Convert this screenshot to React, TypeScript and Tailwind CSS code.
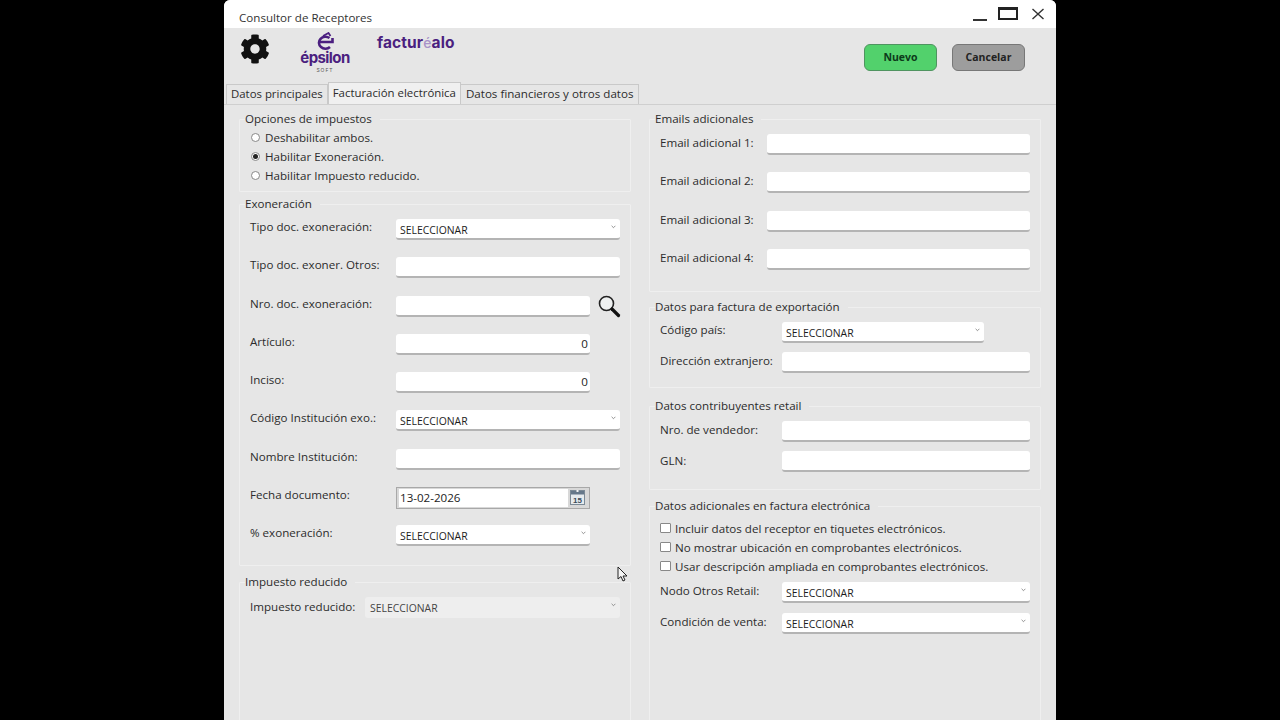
import React from "react";
import { FaCog } from "react-icons/fa";

const FONT = "font-['Open_Sans','Noto_Sans',sans-serif]";
const TEXT = "text-[11.6px] text-[#2c2c2c]";

function Group(props: { title: string; className?: string; body?: string; children: React.ReactNode }) {
  return (
    <fieldset className={`border border-[#efefef] rounded-[1px] ${props.className ?? ""}`}>
      <legend className={`ml-[5px] pr-[8px] leading-[14px] ${TEXT}`}>{props.title}</legend>
      <div className={props.body}>{props.children}</div>
    </fieldset>
  );
}

function Chevron() {
  return (
    <svg width="5" height="4" viewBox="0 0 5 4" className="absolute right-[4px] top-[6px]">
      <path d="M0.6 0.8 L2.5 2.7 L4.4 0.8" fill="none" stroke="#777" strokeWidth="0.8" />
    </svg>
  );
}

function Select(props: { className: string; disabled?: boolean }) {
  return props.disabled ? (
    <div className={`relative h-[21px] rounded-[3px] bg-[#eeeeee] pl-[5px] text-[10.4px] leading-[22px] text-[#444] ${props.className}`}>
      SELECCIONAR
      <Chevron />
    </div>
  ) : (
    <div className={`relative h-[21px] rounded-[3px] bg-white border-b-2 border-[#b4b4b4] pl-[4px] text-[10.4px] leading-[22px] text-[#1c1c1c] ${props.className}`}>
      SELECCIONAR
      <Chevron />
    </div>
  );
}

function Input(props: { className: string; value?: string }) {
  return (
    <div className={`h-[21px] rounded-[3px] bg-white border-b-2 border-[#b4b4b4] pr-[2px] text-right text-[11.6px] leading-[20px] text-[#222] ${props.className}`}>
      {props.value}
    </div>
  );
}

function Radio(props: { label: string; checked?: boolean }) {
  return (
    <div className="flex items-center h-[19px] pl-[11px]">
      <span className="w-[9px] h-[9px] rounded-full border border-[#888] bg-white flex items-center justify-center">
        {props.checked && <span className="w-[5px] h-[5px] rounded-full bg-[#222]" />}
      </span>
      <span className={`ml-[5px] ${TEXT}`}>{props.label}</span>
    </div>
  );
}

function Check(props: { label: string }) {
  return (
    <div className="flex items-center h-[19px] pl-[10px]">
      <span className="w-[11px] h-[10px] border border-[#888] rounded-[1px] bg-white -mt-[1px]" />
      <span className={`ml-[4px] ${TEXT}`}>{props.label}</span>
    </div>
  );
}

function Row(props: { label: string; labelWidth: string; height: string; labelClass?: string; children: React.ReactNode }) {
  return (
    <div className={`flex items-start ${props.height}`}>
      <div className={`${props.labelWidth} shrink-0 leading-[16px] ${TEXT} ${props.labelClass ?? ""}`}>{props.label}</div>
      {props.children}
    </div>
  );
}

function Magnifier() {
  return (
    <svg width="24" height="24" viewBox="0 0 24 24" className="ml-[7px] -mt-[2px]">
      <circle cx="9.5" cy="9.5" r="7" fill="#eef0f0" stroke="#222" strokeWidth="1.6" />
      <path d="M15 15 L21.5 21.5" stroke="#111" strokeWidth="3.2" strokeLinecap="round" />
    </svg>
  );
}

function CalendarIcon() {
  return (
    <svg width="15" height="15" viewBox="0 0 15 15" className="shrink-0 -mt-[1px]">
      <rect x="0.5" y="0.5" width="14" height="14" fill="#e6ebee" stroke="#7c8a96" />
      <rect x="1" y="1" width="13" height="3.5" fill="#66788a" />
      <rect x="6.5" y="0" width="2" height="2" fill="#f4f4f4" />
      <text x="7.5" y="12.6" textAnchor="middle" fontSize="8" fontWeight="bold" fill="#3c4a58" fontFamily="Liberation Sans">15</text>
    </svg>
  );
}

function EpsilonLogo() {
  return (
    <div className="flex flex-col items-center ml-[29px] mt-[4px] w-[52px] text-[#4b1f80]">
      <svg width="18" height="18" viewBox="0 0 18 18">
        <path d="M13.5 6 A6.5 6 0 1 0 14 15" fill="none" stroke="#4b1f80" strokeWidth="2.6" />
        <path d="M4 10 H16.5 V6" fill="none" stroke="#4b1f80" strokeWidth="2.6" />
        <path d="M7 4 L12.5 1 L14.5 4" fill="none" stroke="#4b1f80" strokeWidth="1.8" />
      </svg>
      <div className="text-[15px] leading-[16px] font-bold tracking-[-0.6px] font-['Inter',sans-serif]">épsilon</div>
      <div className="text-[5px] leading-[8px] tracking-[1px] text-[#555] font-['Inter',sans-serif]">SOFT</div>
    </div>
  );
}

function CursorArrow() {
  return (
    <svg width="12" height="17" viewBox="0 0 12 17" className="absolute left-[393px] top-[461px]">
      <path d="M1 1 L1 13 L4 10.5 L6 15 L8 14 L6 10 L10 10 Z" fill="#f4f4f4" stroke="#222" strokeWidth="1" />
    </svg>
  );
}

export default function App() {
  return (
    <div className={`h-screen overflow-hidden bg-black flex justify-center ${FONT}`}>
      <div className="w-[832px] h-[720px] bg-[#e6e6e6] rounded-t-[6px] flex flex-col overflow-hidden">
        <div className="h-[28px] shrink-0 bg-white flex items-center pl-[15px] pt-[8px] text-[11.6px] text-[#333]">
          <span className="flex-1">Consultor de Receptores</span>
          <div className="flex items-center gap-[13px] pr-[11px] -mt-[8px]">
            <span className="w-[14px] h-[2px] bg-[#333] mt-[12px]" />
            <span className="w-[20px] h-[13px] border-2 border-t-[3px] border-[#222] -mt-[1px] -ml-[2px]" />
            <svg width="14" height="14" viewBox="0 0 14 14" className="-mt-[1px]">
              <path d="M1.5 2 L12.5 12 M12.5 2 L1.5 12" stroke="#333" strokeWidth="1.4" />
            </svg>
          </div>
        </div>

        <div className="h-[54px] shrink-0 flex items-start">
          <FaCog className="ml-[16px] mt-[6px] text-[30px] text-[#111]" />
          <EpsilonLogo />
          <div className="ml-[26px] mt-[5px] text-[15.5px] leading-[20px] font-bold tracking-[0.1px] text-[#4b1f80] font-['Inter',sans-serif]">
            factur<span className="text-[14px] font-medium text-[#a892c8]">é</span>alo
          </div>
          <div className="flex-1" />
          <button className="mt-[16px] w-[73px] h-[27px] rounded-[6px] bg-[#52d16c] border border-[#4f9460] text-[10.5px] font-bold text-[#0d3a1a]">Nuevo</button>
          <button className="mt-[16px] ml-[15px] mr-[31px] w-[73px] h-[27px] rounded-[6px] bg-[#9d9d9d] border border-[#777] text-[10.5px] font-bold text-[#222]">Cancelar</button>
        </div>

        <div className="h-[22px] shrink-0 flex items-end pl-[2px] text-[11.4px] text-[#2c2c2c]">
          <div className="h-[20px] px-[4px] border border-b-0 border-[#c9c9c9] leading-[18px]">Datos principales</div>
          <div className="h-[22px] px-[4px] border border-b-0 border-[#c9c9c9] bg-[#f0f0f0] leading-[19px]">Facturación electrónica</div>
          <div className="h-[20px] px-[5px] border border-b-0 border-l-0 border-[#c9c9c9] text-[11.6px] leading-[18px]">Datos financieros y otros datos</div>
        </div>

        <div className="relative flex-1 border-t border-[#cfcfcf] px-[15px] pt-[7px] flex gap-[18px] items-start">
          <CursorArrow />
          <div className="w-[392px] shrink-0 flex flex-col">
            <Group title="Opciones de impuestos" className="h-[80px]" body="pt-[2px]">
              <Radio label="Deshabilitar ambos." />
              <Radio label="Habilitar Exoneración." checked />
              <Radio label="Habilitar Impuesto reducido." />
            </Group>
            <Group title="Exoneración" className="mt-[5px] h-[369px]" body="pl-[10px] pt-[8px]">
              <Row label="Tipo doc. exoneración:" labelWidth="w-[146px]" height="h-[38.3px]"><Select className="w-[224px]" /></Row>
              <Row label="Tipo doc. exoner. Otros:" labelWidth="w-[146px]" height="h-[38.3px]"><Input className="w-[224px]" /></Row>
              <Row label="Nro. doc. exoneración:" labelWidth="w-[146px]" height="h-[38.3px]"><Input className="w-[194px]" /><Magnifier /></Row>
              <Row label="Artículo:" labelWidth="w-[146px]" height="h-[38.3px]"><Input className="w-[194px]" value="0" /></Row>
              <Row label="Inciso:" labelWidth="w-[146px]" height="h-[38.3px]"><Input className="w-[194px]" value="0" /></Row>
              <Row label="Código Institución exo.:" labelWidth="w-[146px]" height="h-[38.3px]"><Select className="w-[224px]" /></Row>
              <Row label="Nombre Institución:" labelWidth="w-[146px]" height="h-[38.3px]"><Input className="w-[224px]" /></Row>
              <Row label="Fecha documento:" labelWidth="w-[146px]" height="h-[38.3px]">
                <div className="w-[194px] h-[22px] border border-[#a8a8a8] bg-[#d8d8d8] flex items-center pl-[2px] pr-[4px] gap-[2px]">
                  <div className="flex-1 h-[18px] bg-white pl-[1px] text-[11.6px] leading-[18px] text-[#222]">13-02-2026</div>
                  <CalendarIcon />
                </div>
              </Row>
              <Row label="% exoneración:" labelWidth="w-[146px]" height="h-[30px]"><Select className="w-[194px]" /></Row>
            </Group>
            <Group title="Impuesto reducido" className="mt-[9px] h-[200px]" body="pl-[10px] pt-[8px]">
              <Row label="Impuesto reducido:" labelWidth="w-[115px]" labelClass="mt-[2px]" height="h-[30px]"><Select disabled className="w-[255px]" /></Row>
            </Group>
          </div>

          <div className="w-[392px] shrink-0 flex flex-col">
            <Group title="Emails adicionales" className="h-[180px]" body="pl-[10px] pt-[8px]">
              <Row label="Email adicional 1:" labelWidth="w-[107px]" labelClass="mt-[1px]" height="h-[38.3px]"><Input className="w-[263px]" /></Row>
              <Row label="Email adicional 2:" labelWidth="w-[107px]" labelClass="mt-[1px]" height="h-[38.3px]"><Input className="w-[263px]" /></Row>
              <Row label="Email adicional 3:" labelWidth="w-[107px]" labelClass="mt-[1px]" height="h-[38.3px]"><Input className="w-[263px]" /></Row>
              <Row label="Email adicional 4:" labelWidth="w-[107px]" labelClass="mt-[1px]" height="h-[38.3px]"><Input className="w-[263px]" /></Row>
            </Group>
            <Group title="Datos para factura de exportación" className="mt-[8px] h-[88px]" body="pl-[10px] pt-[8px]">
              <Row label="Código país:" labelWidth="w-[122px]" height="h-[30px]"><Select className="w-[202px]" /></Row>
              <Row label="Dirección extranjero:" labelWidth="w-[122px]" labelClass="mt-[1px]" height="h-[30px]"><Input className="w-[248px]" /></Row>
            </Group>
            <Group title="Datos contribuyentes retail" className="mt-[11px] h-[91px]" body="pl-[10px] pt-[8px]">
              <Row label="Nro. de vendedor:" labelWidth="w-[122px]" labelClass="mt-[1px]" height="h-[30px]"><Input className="w-[248px]" /></Row>
              <Row label="GLN:" labelWidth="w-[122px]" labelClass="mt-[2px]" height="h-[30px]"><Input className="w-[248px]" /></Row>
            </Group>
            <Group title="Datos adicionales en factura electrónica" className="mt-[9px] h-[230px]" body="pt-[6px]">
              <Check label="Incluir datos del receptor en tiquetes electrónicos." />
              <Check label="No mostrar ubicación en comprobantes electrónicos." />
              <Check label="Usar descripción ampliada en comprobantes electrónicos." />
              <div className="pl-[10px] pt-[6px]">
                <Row label="Nodo Otros Retail:" labelWidth="w-[122px]" labelClass="mt-[1px]" height="h-[31px]"><Select className="w-[248px]" /></Row>
                <Row label="Condición de venta:" labelWidth="w-[122px]" labelClass="mt-[1px]" height="h-[30px]"><Select className="w-[248px]" /></Row>
              </div>
            </Group>
          </div>
        </div>
      </div>
    </div>
  );
}
